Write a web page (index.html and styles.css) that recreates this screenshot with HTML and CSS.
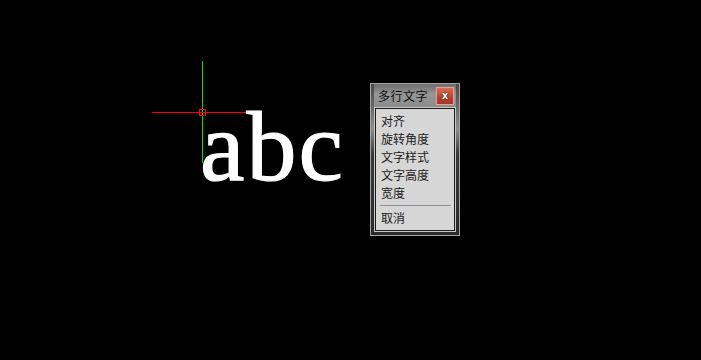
FILE: index.html
```html
<!DOCTYPE html>
<html lang="zh">
<head>
<meta charset="utf-8">
<title>多行文字</title>
<link rel="stylesheet" href="styles.css">
</head>
<body>
<div class="canvas">
  <div class="vline"></div>
  <div class="hline"></div>
  <div class="pick"></div>
  <div class="mtext">abc</div>
  <div class="dialog">
    <div class="titlebar">
      <span class="title">多行文字</span>
      <span class="close">x</span>
    </div>
    <div class="menu">
      <div class="item">对齐</div>
      <div class="item">旋转角度</div>
      <div class="item">文字样式</div>
      <div class="item">文字高度</div>
      <div class="item">宽度</div>
      <div class="sep"></div>
      <div class="item">取消</div>
    </div>
  </div>
</div>
</body>
</html>
```
FILE: styles.css
```css
html, body {
  margin: 0;
  padding: 0;
  background: #000;
}
.canvas {
  position: relative;
  width: 701px;
  height: 360px;
  overflow: hidden;
  background: #000;
}
.vline {
  position: absolute;
  left: 202px;
  top: 61px;
  width: 1px;
  height: 102px;
  background: #00e000;
}
.hline {
  position: absolute;
  left: 152px;
  top: 112px;
  width: 102px;
  height: 1px;
  background: #ff0000;
}
.pick {
  position: absolute;
  left: 199px;
  top: 109px;
  width: 5px;
  height: 5px;
  border: 1px solid #ff0000;
}
.mtext {
  position: absolute;
  left: 200px;
  top: 97px;
  font-family: "Liberation Serif", serif;
  font-size: 100px;
  line-height: 100px;
  letter-spacing: 2px;
  color: #fff;
  -webkit-text-stroke: 1.2px #fff;
  white-space: nowrap;
}
.dialog {
  position: absolute;
  left: 370px;
  top: 83px;
  width: 90px;
  height: 153px;
  box-sizing: border-box;
  border: 1px solid #a4a4a4;
  padding: 0 3px 3px;
  display: flex;
  flex-direction: column;
  background: linear-gradient(#4a4a4a 0%, #6a6a6a 16%, #8c8c8c 30%, #3a3a3a 46%, #2a2a2a 100%);
  font-family: "Noto Sans CJK SC", "Noto Sans", sans-serif;
}
.titlebar {
  height: 23px;
  display: flex;
  align-items: center;
  justify-content: space-between;
  padding: 0 2px 0 4px;
  background: linear-gradient(#6c6c6c, #969696 45%, #8c8c8c);
}
.title {
  font-size: 12px;
  line-height: 14px;
  color: #0e0e0e;
  letter-spacing: 0.5px;
}
.close {
  width: 16px;
  height: 16px;
  border: 1px solid #e2a292;
  background: linear-gradient(#de6a52, #b8402c 60%, #a83626);
  color: #fff;
  font-family: "DejaVu Sans", sans-serif;
  font-weight: bold;
  font-size: 10px;
  line-height: 15px;
  text-align: center;
  text-shadow: 0 0 1px #000, 0 0 1px #000;
}
.menu {
  flex: 1;
  border: 1px solid #c6c6c6;
  box-shadow: inset 0 0 0 1px #1c1c1c;
  background: #d6d6d6;
  padding: 4px 4px 3px 6px;
}
.item {
  font-size: 12px;
  line-height: 18px;
  height: 18px;
  color: #1a1a1a;
  white-space: nowrap;
}
.sep {
  height: 1px;
  margin: 3px 0 3px -1px;
  background: #8e8e8e;
}
```
